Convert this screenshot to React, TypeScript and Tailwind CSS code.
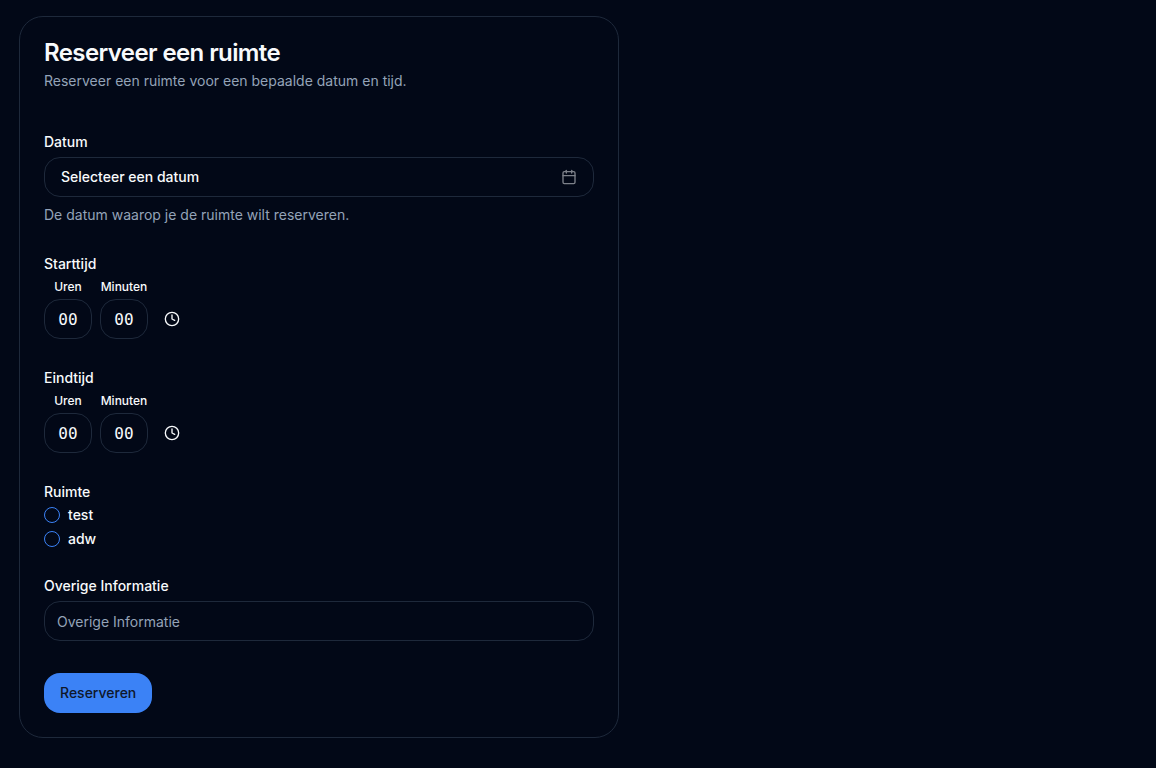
import { Calendar, Clock } from "lucide-react";

function TimeField({ label }: { label: string }) {
  return (
    <div>
      <p className="text-sm leading-none font-medium text-[#f8fafc]">{label}</p>
      <div className="mt-2 flex items-end gap-2">
        <div className="grid w-12 gap-1 text-center">
          <span className="text-xs leading-4 font-medium text-[#f8fafc]">Uren</span>
          <input
            readOnly
            value="00"
            className="h-10 w-12 rounded-2xl border border-[#1e293b] bg-transparent text-center font-['DejaVu_Sans_Mono',monospace] text-base text-[#f8fafc] outline-none"
          />
        </div>
        <div className="grid w-12 gap-1 text-center">
          <span className="text-xs leading-4 font-medium text-[#f8fafc]">Minuten</span>
          <input
            readOnly
            value="00"
            className="h-10 w-12 rounded-2xl border border-[#1e293b] bg-transparent text-center font-['DejaVu_Sans_Mono',monospace] text-base text-[#f8fafc] outline-none"
          />
        </div>
        <div className="flex h-10 items-center pl-2">
          <Clock className="h-4 w-4 text-[#f8fafc]" />
        </div>
      </div>
    </div>
  );
}

function Radio({ label }: { label: string }) {
  return (
    <label className="flex h-4 items-center gap-2">
      <span className="h-4 w-4 rounded-full border border-[#3b82f6]" />
      <span className="text-sm leading-none font-medium text-[#f8fafc]">{label}</span>
    </label>
  );
}

export default function App() {
  return (
    <div className="min-h-[768px] bg-[#020817] pt-4 pl-[19px] font-['Inter',sans-serif]">
      <div className="w-[600px] rounded-3xl border border-[#1e293b] bg-[#020817] p-6">
        <h1 className="text-2xl leading-none font-semibold tracking-tight text-[#f8fafc]">
          Reserveer een ruimte
        </h1>
        <p className="mt-1.5 text-sm leading-5 text-[#94a3b8]">
          Reserveer een ruimte voor een bepaalde datum en tijd.
        </p>

        <form className="mt-11 flex flex-col gap-8">
          <div>
            <p className="text-sm leading-none font-medium text-[#f8fafc]">Datum</p>
            <button
              type="button"
              className="mt-2 flex h-10 w-full items-center justify-between rounded-2xl border border-[#1e293b] px-4 text-sm font-medium text-[#f8fafc]"
            >
              Selecteer een datum
              <Calendar className="h-4 w-4 opacity-50" />
            </button>
            <p className="mt-2 text-sm leading-5 text-[#94a3b8]">
              De datum waarop je de ruimte wilt reserveren.
            </p>
          </div>

          <TimeField label="Starttijd" />
          <TimeField label="Eindtijd" />

          <div>
            <p className="text-sm leading-none font-medium text-[#f8fafc]">Ruimte</p>
            <div className="mt-2 flex flex-col gap-2">
              <Radio label="test" />
              <Radio label="adw" />
            </div>
          </div>

          <div>
            <p className="text-sm leading-none font-medium text-[#f8fafc]">Overige Informatie</p>
            <input
              placeholder="Overige Informatie"
              className="mt-2 h-10 w-full rounded-2xl border border-[#1e293b] bg-transparent px-3 text-sm text-[#f8fafc] outline-none placeholder:text-[#94a3b8]"
            />
          </div>

          <button
            type="button"
            className="h-10 w-fit rounded-2xl bg-[#3b82f6] px-4 text-sm font-medium text-[#0f172a]"
          >
            Reserveren
          </button>
        </form>
      </div>
    </div>
  );
}
